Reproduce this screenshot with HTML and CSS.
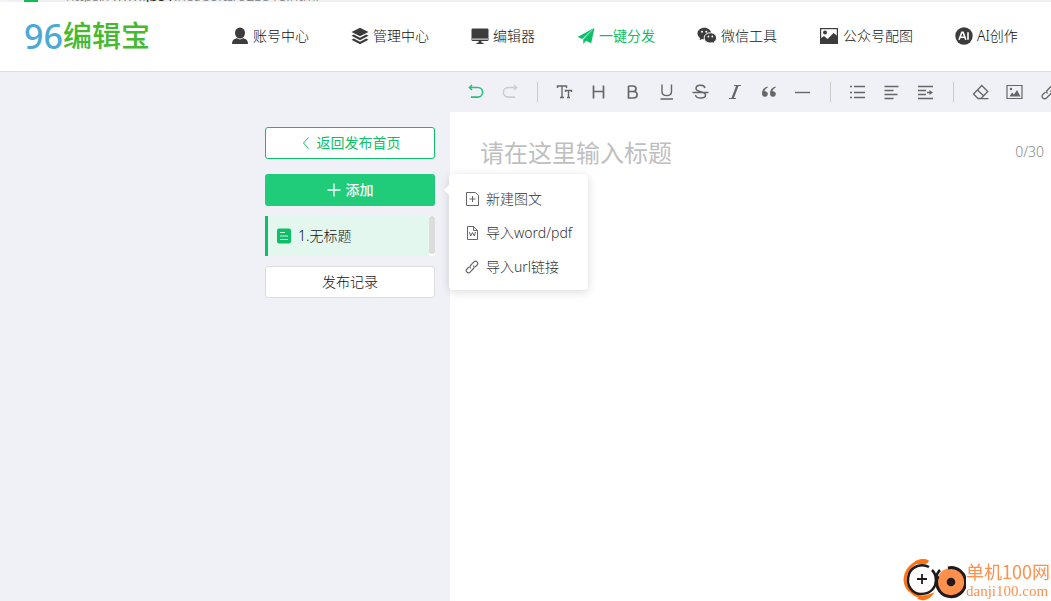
FILE: index.html
```html
<!DOCTYPE html>
<html lang="zh-CN">
<head>
<meta charset="utf-8">
<title>96编辑宝</title>
<link rel="stylesheet" href="styles.css">
</head>
<body>
<div class="address"><span class="lock"></span><span class="url">https://www.<b>jb51</b>.net/softs/923518.html</span></div>
<header class="header">
  <a class="logo" href="#"><span class="logo-num">96</span><span class="logo-name">编辑宝</span></a>
  <nav class="nav">
    <a href="#"><svg width="18" height="18" viewBox="0 0 18 18" fill="currentColor"><ellipse cx="9" cy="6" rx="5" ry="5.6"/><path d="M1 17c0-3.500 1.500-5 4.800-5.700 2 1.500 4.400 1.500 6.400 0C15.500 12 17 13.500 17 17z"/></svg>账号中心</a>
    <a href="#"><svg width="18" height="18" viewBox="0 0 18 18" fill="currentColor"><path d="M9 .8 17.500 5 9 9.300.5 5z"/><path d="m.5 8.800 2.300-1.200L9 10.800l6.200-3.200 2.300 1.200L9 13.200z"/><path d="m.5 12.800 2.300-1.200L9 14.800l6.200-3.200 2.300 1.200L9 17.200z"/></svg>管理中心</a>
    <a href="#"><svg width="18" height="18" viewBox="0 0 18 18"><rect x=".5" y="1.500" width="17" height="12.500" rx="1.300" fill="currentColor"/><path d="M1 11.500h16v1.300H1z" fill="#c8cccc"/><path d="M7.500 14h3v1.800h2V17h-7v-1.200h2z" fill="currentColor"/></svg>编辑器</a>
    <a href="#" class="active"><svg width="18" height="18" viewBox="0 0 18 18" fill="currentColor"><path d="M17.500.8.5 10l4.700 2z"/><path d="M17.500.8 6.300 12.400V17l2.700-3.300 5.200 2.500z"/></svg>一键分发</a>
    <a href="#"><svg width="20" height="18" viewBox="0 0 20 18"><path d="M7.300.8C3.400.8.500 3.300.500 6.500c0 1.900 1 3.500 2.700 4.500l-.7 2.200L5 11.900c3.600.9 8.700-.9 9.100-5C14.300 3.200 11.100.8 7.300.8z" fill="currentColor"/><path d="M13.300 5.800c-3.500 0-6.100 2.200-6.100 5.100s2.700 5.100 6.100 5.100c.8 0 1.500-.1 2.200-.3l2.100 1.200-.6-1.800c1.500-.9 2.500-2.400 2.500-4.200 0-2.900-2.700-5.100-6.200-5.100z" fill="currentColor" stroke="#fff"/><g fill="#fff"><circle cx="5" cy="4.700" r="1"/><circle cx="9.300" cy="4.700" r="1"/><circle cx="11.400" cy="9.500" r=".9"/><circle cx="15.300" cy="9.500" r=".9"/></g></svg>微信工具</a>
    <a href="#"><svg width="20" height="18" viewBox="0 0 20 18"><rect x="1.600" y="1.600" width="16.800" height="14.800" fill="none" stroke="currentColor" stroke-width="1.200"/><circle cx="6" cy="5.500" r="2" fill="currentColor"/><path d="M1.500 11.500 5 9l3.500 3 6-6 4 3v7.500h-17z" fill="currentColor"/></svg>公众号配图</a>
    <a href="#"><svg width="18" height="18" viewBox="0 0 18 18"><circle cx="9" cy="9" r="8.700" fill="currentColor"/><path d="m4 12.700 2.900-7.400h1.200l2.700 7.400M5 10.300h4.800M13 5.200v7.500" fill="none" stroke="#fff" stroke-width="1.600"/></svg>AI创作</a>
  </nav>
</header>
<div class="workspace">
  <aside class="side">
    <div class="panel">
      <a class="btn back" href="#"><svg width="12" height="14" viewBox="0 0 12 14" fill="none" stroke="currentColor"><path d="M8.500 1.500 3.500 7l5 5.500"/></svg>返回发布首页</a>
      <div class="add-wrap">
        <button class="btn add" type="button"><svg width="14" height="14" viewBox="0 0 14 14" fill="none" stroke="currentColor" stroke-width="1.300"><path d="M7 .5v13M.5 7h13"/></svg>添加</button>
        <div class="popover">
          <button type="button"><svg width="14" height="16" viewBox="0 0 14 16" fill="none" stroke="currentColor"><path d="M1.500 1.500h9l3 3v10h-12zM4.500 8h6M7.500 5v6"/></svg>新建图文</button>
          <button type="button"><svg width="14" height="16" viewBox="0 0 14 16" fill="none" stroke="currentColor"><path d="M2.500 1.500h6l4 4v9h-10zM8.500 1.500v4h4M4.500 7l1.200 4L7.500 7.500 9.300 11l1.200-4"/></svg>导入word/pdf</button>
          <button type="button"><svg width="14" height="16" viewBox="0 0 16 16" fill="none" stroke="currentColor" stroke-width="1.300"><path d="M6.500 9.500c-1-1-1-2.500 0-3.500l3.700-3.900c1-1 2.600-1 3.600 0s1 2.600 0 3.600L11.500 8M9.500 6.500c1 1 1 2.500 0 3.500l-3.700 3.900c-1 1-2.600 1-3.600 0s-1-2.600 0-3.600L4.500 8"/></svg>导入url链接</button>
        </div>
      </div>
      <div class="list">
        <a class="doc" href="#"><svg width="14" height="16" viewBox="0 0 14 16"><rect y=".5" width="14" height="15" rx="2" fill="#0cbf68"/><path d="M3 4.500h5M3 8h8M3 11.500h8" stroke="#d5f5e4" stroke-width="1.200"/></svg>1.无标题</a>
        <span class="track"><span class="thumb"></span></span>
      </div>
      <button class="btn record" type="button">发布记录</button>
    </div>
  </aside>
  <main class="editor">
    <div class="toolbar">
      <button type="button" class="undo" aria-label="撤销"><svg viewBox="0 0 18 18"><path d="M5 2 2.500 4.500 5 7M2.500 4.500h8.300a4.800 4.800 0 0 1 0 9.600H4" stroke-width="1.600"/></svg></button>
      <button type="button" class="redo" aria-label="重做"><svg viewBox="0 0 18 18"><path d="m13 2 2.500 2.500L13 7M15.500 4.500H7.200a4.800 4.800 0 0 0 0 9.600H14" stroke-width="1.600"/></svg></button>
      <i class="sep"></i>
      <button type="button" aria-label="字号"><svg viewBox="0 0 18 18"><path d="M1.500 5V3h9v2M6 3v11.500M4 14.500h4M9.500 9V7.500h6V9M12.500 7.500v7M11 14.500h3" stroke-width="1.400"/></svg></button>
      <button type="button" aria-label="标题"><svg viewBox="0 0 18 18"><path d="M3.500 2.500v13M13.500 2.500v13M3.500 8.500h10" stroke-width="1.700"/></svg></button>
      <button type="button" aria-label="加粗"><svg viewBox="0 0 18 18"><path d="M4.500 3H9c4 0 4 5.500 0 5.500H4.500M9 8.500c5.500 0 5.500 6.500 0 6.500H4.500V3" stroke-width="1.700"/></svg></button>
      <button type="button" aria-label="下划线"><svg viewBox="0 0 18 18"><path d="M4 1.500v7c0 5.500 9.500 5.500 9.500 0v-7M2.500 16H15" stroke-width="1.400"/></svg></button>
      <button type="button" aria-label="删除线"><svg viewBox="0 0 18 18"><path d="M13 5C12 1.300 4 1.500 4 5.500c0 4 9.500 2.500 9.500 6.500 0 4-9.500 4-10 0M.5 9.500h16" stroke-width="1.500"/></svg></button>
      <button type="button" aria-label="斜体"><svg viewBox="0 0 18 18"><path d="M8 2.500h7M3 15.500h7" stroke-width="1.200"/><path d="m11.500 2.500-5 13" stroke-width="2.200"/></svg></button>
      <button type="button" aria-label="引用"><svg viewBox="0 0 18 18"><path d="M7.500 3.500C4 4.500 2 7 2 10.500c0 2 1.200 3.300 2.800 3.300s3-1.200 3-2.900-1.300-2.800-3.300-2.700C4.800 6.500 6 5.200 7.800 4.500zM15.500 3.500c-3.500 1-5.500 3.500-5.500 7 0 2 1.200 3.300 2.800 3.300s3-1.200 3-2.900-1.300-2.800-3.300-2.700c.3-1.700 1.500-3 3.300-3.700z" fill="currentColor" stroke="none"/></svg></button>
      <button type="button" aria-label="分割线"><svg viewBox="0 0 18 18"><path d="M1 9.500h15" stroke-width="1.400"/></svg></button>
      <i class="sep"></i>
      <button type="button" aria-label="列表"><svg viewBox="0 0 18 18"><path d="M1 3.500h2M1 9.500h2M1 14.500h2M5 3.500h11M5 9.500h11M5 14.500h11" stroke-width="1.400"/></svg></button>
      <button type="button" aria-label="对齐"><svg viewBox="0 0 18 18"><path d="M1.500 3.500h14M1.500 7.500h9M1.500 11.500h13M1.500 15.500h9" stroke-width="1.400"/></svg></button>
      <button type="button" aria-label="缩进"><svg viewBox="0 0 18 18"><path d="M1 3.500h15M1 7.500h8M1 11.500h8M1 15.500h15M10 9.500h4" stroke-width="1.400"/><path d="m12.500 7 3.500 2.500-3.500 2.500z" fill="currentColor" stroke="none"/></svg></button>
      <i class="sep"></i>
      <button type="button" aria-label="清除"><svg viewBox="0 0 18 18"><path d="m9.800 2.500 6 6-6.800 7H6L1.500 11zM5.500 7l6.300 6M5.500 15.600h11" stroke-width="1.300"/></svg></button>
      <button type="button" aria-label="图片"><svg viewBox="0 0 18 18"><path d="M1 2.500h15v13H1z" stroke-width="1.200"/><path d="m3.500 13.500 2.500-4 2 2L11 7l3.500 6.500z" fill="currentColor" stroke="none"/><circle cx="5" cy="6" r="1.200" fill="currentColor" stroke="none"/></svg></button>
      <button type="button" aria-label="链接"><svg viewBox="0 0 18 18"><path d="M7.500 10.500c-1-1-1-2.500 0-3.500l4-4c1-1 2.600-1 3.600 0s1 2.600 0 3.600L12.500 9M10.500 7.500c1 1 1 2.500 0 3.500l-4 4c-1 1-2.600 1-3.600 0s-1-2.600 0-3.600L5.500 9" stroke-width="1.300"/></svg></button>
    </div>
    <div class="title-row">
      <input class="title" type="text" maxlength="30" aria-label="标题" placeholder="请在这里输入标题">
      <span class="count">0/30</span>
    </div>
  </main>
</div>
<div class="watermark">
  <svg width="64" height="42" viewBox="0 0 64 42" fill="none"><path d="M26 3C21 0 15 2 12 5 2 12 0 24 8 32" stroke="#ff7412" stroke-width="3"/><path d="M14 5c4-6 10-6 13-3l-3 3z" fill="#ff7412"/><path d="M6 28c4 9 13 12 23 8-3 4-9 5-13 3" stroke="#ff7412" stroke-width="2.500"/><path d="M27 8C20 4 10 7 7 15c-4 12 4 20 12 20 11 0 15-8 15-14 0-3-1-7-4-10" stroke="#201a1a" stroke-width="2.500"/><path d="M34 21c0-4 1-7 4-10" stroke="#201a1a" stroke-width="2.500"/><path d="M20 15v10M15 20h10" stroke="#201a1a" stroke-width="1.800"/><circle cx="49" cy="23" r="14" fill="#ff8f4d"/><path d="M46 9a14.500 14.500 0 1 1-10 8" stroke="#201a1a" stroke-width="3"/><circle cx="49" cy="23" r="4.300" fill="#201a1a"/></svg>
  <div class="mark-text"><span class="mark-name">单机100网</span><span class="mark-site">danji100.com</span></div>
</div>
</body>
</html>
```
FILE: styles.css
```css
* { box-sizing: border-box; }
body {
  margin: 0;
  min-height: 100vh;
  display: flex;
  flex-direction: column;
  font: 14px/20px "Noto Sans", "Noto Sans CJK SC", sans-serif;
  font-weight: 300;
  color: #111;
  background: #f0f1f6;
  overflow: hidden;
}
a { color: inherit; text-decoration: none; }
button { font: inherit; color: inherit; border: 0; background: none; padding: 0; cursor: pointer; }
svg { display: block; flex: none; }

.address {
  height: 2px;
  margin-left: 12px;
  padding-left: 12px;
  display: flex;
  align-items: flex-end;
  gap: 28px;
  overflow: hidden;
  background: #f0f0f0;
  color: #777;
}
.lock { width: 14px; height: 2px; background: #0cbf55; }
.url { line-height: 12px; font-size: 14px; }
.url b { color: #222; font-weight: 400; }

.header {
  height: 70px;
  flex: none;
  display: flex;
  align-items: center;
  padding: 0 0 2px 24px;
  background: #fff;
  border-bottom: 1px solid #dcdfdf;
}
.logo { width: 207px; flex: none; display: flex; align-items: center; line-height: 40px; }
.logo-num { font: 500 34px/40px "Noto Sans", sans-serif; color: #4aaad5; }
.logo-name { font-size: 29px; font-weight: 500; color: #47b92f; }
.nav { display: flex; gap: 42px; white-space: nowrap; }
.nav a { display: flex; align-items: center; gap: 4px; }
.nav svg { color: #3c3c3c; }
.nav .active, .nav .active svg { color: #0cbf68; }
.nav .active { font-weight: 400; }

.workspace { flex: 1; display: flex; }
.side { width: 450px; flex: none; display: flex; justify-content: flex-end; padding: 55px 15px 0 0; }
.panel { width: 170px; display: flex; flex-direction: column; }
.btn {
  width: 100%;
  height: 32px;
  display: flex;
  align-items: center;
  justify-content: center;
  gap: 5px;
  border-radius: 3px;
}
.back { border: 1px solid #0cbf68; background: #fff; color: #0cbf68; font-weight: 400; }
.add { background: #20cb79; color: #fff; font-weight: 500; }
.add-wrap { position: relative; margin: 15px 0 10px; }
.record { border: 1px solid #dcdcdc; background: #fff; }

.popover {
  position: absolute;
  z-index: 2;
  top: 0;
  left: calc(100% + 14px);
  padding: 8px 16px 6px;
  border-radius: 4px;
  background: #fff;
  color: #333;
  box-shadow: 0 2px 10px rgba(0, 0, 0, .15);
  white-space: nowrap;
}
.popover svg { color: #666; }
.popover::before {
  content: "";
  position: absolute;
  left: -5px;
  top: 11px;
  border: 5px solid transparent;
  border-left-width: 0;
  border-right-color: #fff;
}
.popover button { height: 34px; display: flex; align-items: center; gap: 7px; }

.list { height: 40px; display: flex; margin-bottom: 10px; }
.doc {
  flex: 1;
  display: flex;
  align-items: center;
  gap: 7px;
  padding-left: 9px;
  border-left: 3px solid #0cbf68;
  background: #e4f7ee;
}
.track { width: 6px; background: #fff; }
.thumb { display: block; height: 38px; border-radius: 3px; background: #dcdcdc; }

.editor { flex: 1; min-width: 0; background: #fff; }
.toolbar {
  height: 40px;
  display: flex;
  align-items: center;
  padding-left: 9px;
  overflow: hidden;
  background: #f0f1f6;
  color: #666;
}
.toolbar button { width: 34px; height: 34px; flex: none; display: flex; align-items: center; justify-content: center; }
.toolbar svg { width: 18px; height: 18px; fill: none; stroke: currentColor; }
.toolbar .undo { color: #27c07b; }
.toolbar .redo { color: #ccc; }
.sep { width: 1px; height: 20px; flex: none; margin: 0 10px; background: #ccc; }
.title-row { display: flex; align-items: center; padding: 20px 7px 0 30px; }
.title {
  flex: 1;
  min-width: 0;
  height: 40px;
  padding: 0;
  border: 0;
  outline: 0;
  font: inherit;
  font-size: 24px;
  font-weight: 400;
  background: none;
}
.title::placeholder { color: #bfbfbf; opacity: 1; }
.count { color: #888; }

.watermark { position: fixed; right: 1px; bottom: 0; display: flex; align-items: flex-end; color: #ff8f4d; }
.mark-text { display: flex; flex-direction: column; white-space: nowrap; }
.mark-name { font-family: "Noto Sans CJK SC", sans-serif; font-weight: 400; font-size: 18px; line-height: 20px; }
.mark-site { font: 400 15px/20px "Liberation Serif", serif; }
```
